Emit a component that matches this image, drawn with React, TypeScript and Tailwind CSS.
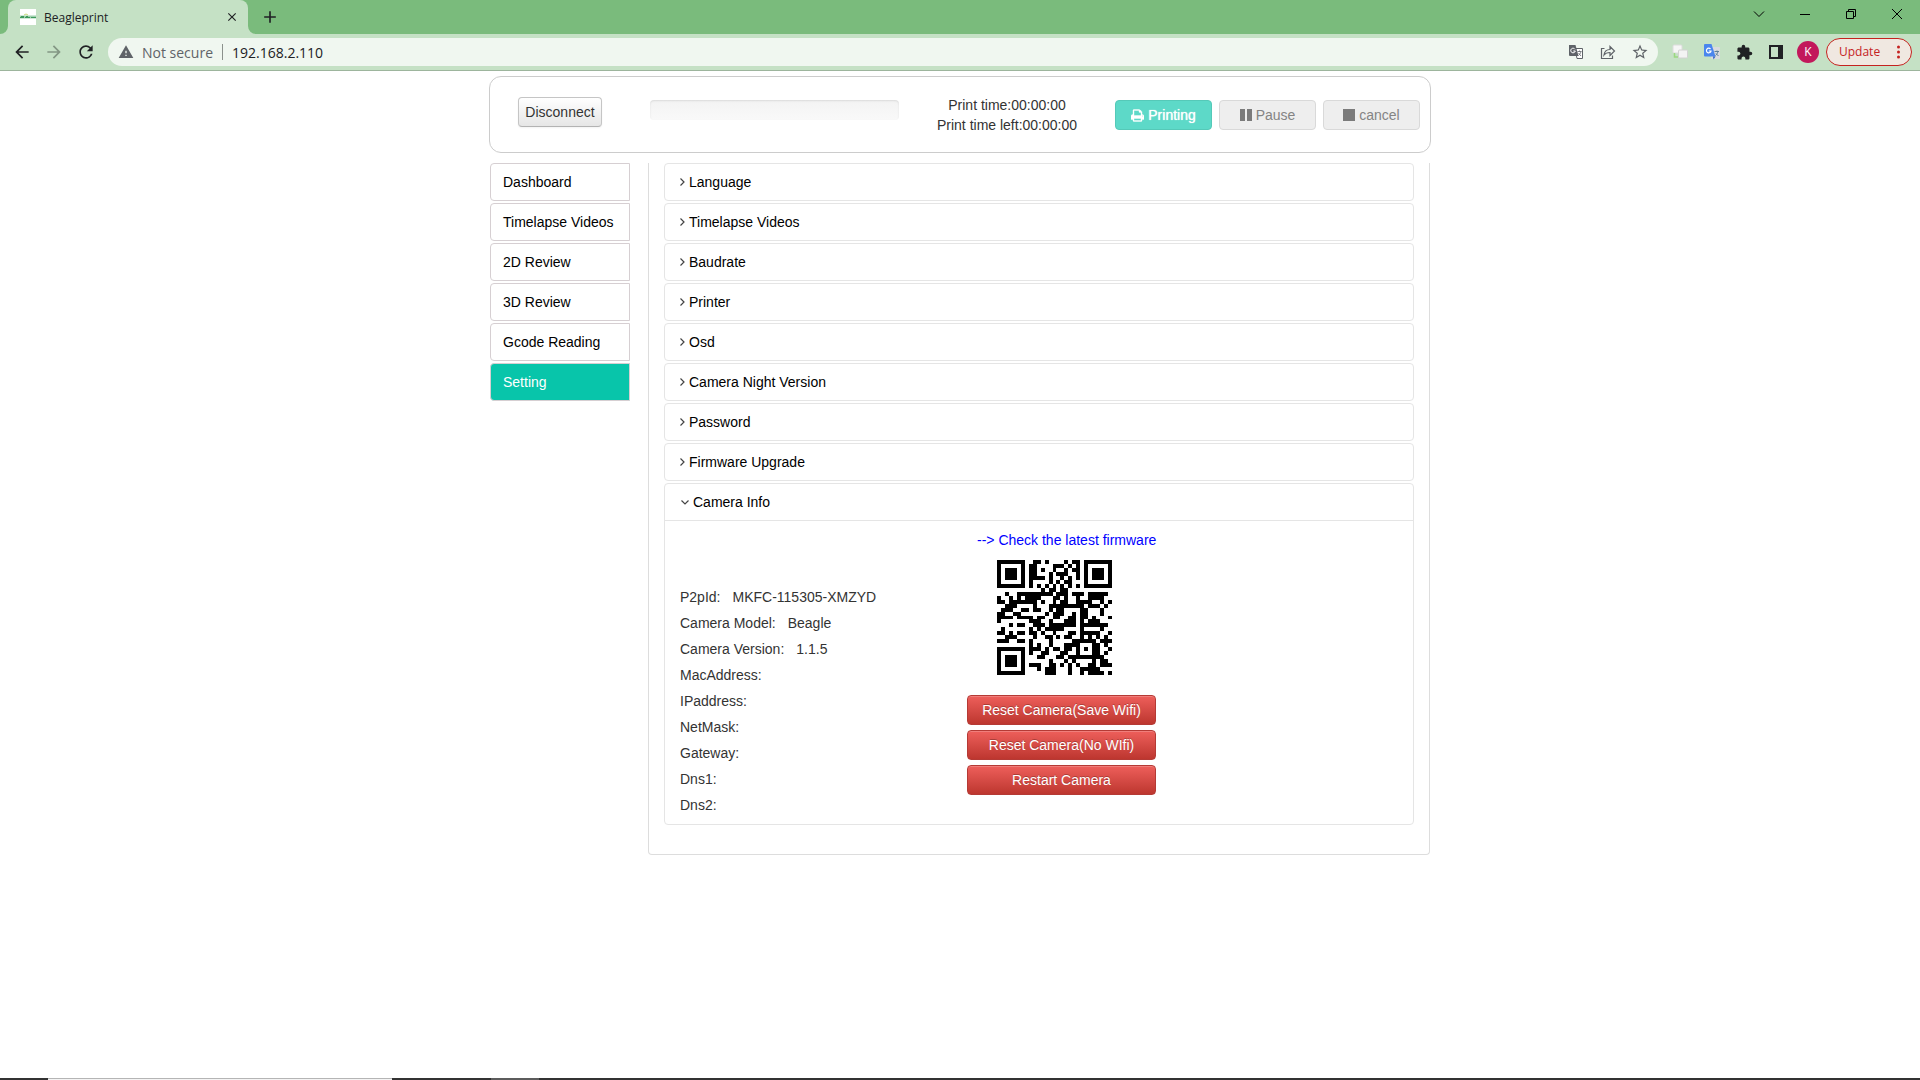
import type { ReactNode } from "react";
import {
  MdArrowBack,
  MdArrowForward,
  MdClose,
  MdAdd,
  MdExtension,
  MdRefresh,
  MdStarBorder,
  MdWarning,
} from "react-icons/md";

/* ---------- QR code (version 3, error correction H, byte mode) ---------- */

const QR_SIZE = 29;
const BLOCKS = 2;
const DATA_PER_BLOCK = 13;
const EC_PER_BLOCK = 22;
const FORMAT_BITS = "001001110111110"; // level H, mask 1

function gfMul(a: number, b: number) {
  let r = 0;
  for (let i = 7; i >= 0; i--) {
    r = (r << 1) ^ ((r >>> 7) * 0x11d);
    r ^= ((b >>> i) & 1) * a;
  }
  return r;
}

function reedSolomon(data: number[], degree: number) {
  const gen: number[] = new Array(degree).fill(0);
  gen[degree - 1] = 1;
  let root = 1;
  for (let i = 0; i < degree; i++) {
    for (let j = 0; j < degree; j++) {
      gen[j] = gfMul(gen[j], root);
      if (j + 1 < degree) gen[j] ^= gen[j + 1];
    }
    root = gfMul(root, 2);
  }
  const rem: number[] = new Array(degree).fill(0);
  for (const b of data) {
    const factor = b ^ (rem.shift() as number);
    rem.push(0);
    for (let i = 0; i < degree; i++) rem[i] ^= gfMul(gen[i], factor);
  }
  return rem;
}

function encodeQr(text: string): boolean[][] {
  let bits = "0100" + text.length.toString(2).padStart(8, "0");
  for (const ch of text) bits += ch.charCodeAt(0).toString(2).padStart(8, "0");
  bits += "0000";
  const data = (bits.match(/.{8}/g) as string[]).map((b) => parseInt(b, 2));
  for (let pad = 0xec; data.length < BLOCKS * DATA_PER_BLOCK; pad ^= 0xec ^ 0x11) data.push(pad);

  const blocks = [data.slice(0, DATA_PER_BLOCK), data.slice(DATA_PER_BLOCK)];
  const ecs = blocks.map((b) => reedSolomon(b, EC_PER_BLOCK));
  const stream: number[] = [];
  for (let i = 0; i < DATA_PER_BLOCK; i++) blocks.forEach((b) => stream.push(b[i]));
  for (let i = 0; i < EC_PER_BLOCK; i++) ecs.forEach((b) => stream.push(b[i]));

  const m: (boolean | null)[][] = Array.from({ length: QR_SIZE }, () => new Array(QR_SIZE).fill(null));
  const square = (cr: number, cc: number, radius: number, light: number[]) => {
    for (let r = -radius; r <= radius; r++)
      for (let c = -radius; c <= radius; c++) {
        const y = cr + r;
        const x = cc + c;
        if (y < 0 || x < 0 || y >= QR_SIZE || x >= QR_SIZE) continue;
        m[y][x] = !light.includes(Math.max(Math.abs(r), Math.abs(c)));
      }
  };
  square(3, 3, 4, [2, 4]);
  square(3, QR_SIZE - 4, 4, [2, 4]);
  square(QR_SIZE - 4, 3, 4, [2, 4]);
  square(22, 22, 2, [1]);
  for (let i = 8; i < QR_SIZE - 8; i++) {
    m[6][i] = i % 2 === 0;
    m[i][6] = i % 2 === 0;
  }
  const firstCopy = [
    [8, 0], [8, 1], [8, 2], [8, 3], [8, 4], [8, 5], [8, 7], [8, 8],
    [7, 8], [5, 8], [4, 8], [3, 8], [2, 8], [1, 8], [0, 8],
  ];
  for (let i = 0; i < 15; i++) {
    const on = FORMAT_BITS[i] === "1";
    m[firstCopy[i][0]][firstCopy[i][1]] = on;
    if (i < 7) m[QR_SIZE - 1 - i][8] = on;
    else m[8][QR_SIZE - 15 + i] = on;
  }
  m[QR_SIZE - 8][8] = true;

  let n = 0;
  let up = true;
  for (let right = QR_SIZE - 1; right > 0; right -= 2) {
    if (right === 6) right = 5;
    for (let k = 0; k < QR_SIZE; k++) {
      const y = up ? QR_SIZE - 1 - k : k;
      for (const x of [right, right - 1]) {
        if (m[y][x] !== null) continue;
        const bit = n < stream.length * 8 && ((stream[n >> 3] >> (7 - (n & 7))) & 1) === 1;
        n++;
        m[y][x] = bit !== (y % 2 === 0);
      }
    }
    up = !up;
  }
  return m as boolean[][];
}

function QrCode({ value }: { value: string }) {
  const path = encodeQr(value)
    .flatMap((row, y) => row.map((on, x) => (on ? `M${x} ${y}h1v1h-1z` : "")))
    .join("");
  return (
    <svg className="ml-[30px] mt-[10px] size-[115px]" viewBox="0 0 29 29" shapeRendering="crispEdges" role="img" aria-label={value}>
      <path d={path} fill="#000" />
    </svg>
  );
}

/* ---------- Browser chrome ---------- */

function IconButton({ label, className, children }: { label: string; className: string; children: ReactNode }) {
  return (
    <button type="button" aria-label={label} className={`flex h-7 shrink-0 items-center justify-center ${className}`}>
      {children}
    </button>
  );
}

function TabStrip() {
  return (
    <div className="flex h-[34px] items-stretch bg-[#7abb7c]">
      <svg className="h-2 w-2 self-end" viewBox="0 0 8 8" aria-hidden="true">
        <path d="M8 0v8H0a8 8 0 0 0 8-8z" fill="#c5e1c5" />
      </svg>
      <div className="flex w-[240px] items-center rounded-t-lg bg-[#c5e1c5] pl-3 pr-2">
        <svg className="size-4 shrink-0" viewBox="0 0 16 16" aria-hidden="true">
          <rect width="16" height="16" fill="#fff" />
          <path d="M0 8h16" stroke="#9fd0ae" strokeWidth="3" />
          <path d="M0 8.500h4M5 8.500h5M11 8.500h5M1 7.500h3M6 7.500h2" stroke="#3f9a5c" />
          <path d="M4 6l2-1 2 1" stroke="#c9d97a" fill="none" />
        </svg>
        <span className="ml-2 flex-1 pt-px text-[12px] text-[#202124]">Beagleprint</span>
        <IconButton label="Close tab" className="w-4">
          <MdClose size={14} color="#202124" />
        </IconButton>
      </div>
      <svg className="h-2 w-2 self-end" viewBox="0 0 8 8" aria-hidden="true">
        <path d="M0 0v8h8a8 8 0 0 1-8-8z" fill="#c5e1c5" />
      </svg>
      <IconButton label="New tab" className="mt-[3px] w-7">
        <MdAdd size={20} color="#202124" />
      </IconButton>
      <div className="ml-auto flex text-black">
        <IconButton label="Search tabs" className="w-[46px]">
          <svg width="12" height="12" viewBox="0 0 12 12" fill="none" stroke="currentColor"><path d="M1 3.5l5 5 5-5" /></svg>
        </IconButton>
        <IconButton label="Minimize" className="w-[46px]">
          <svg width="10" height="10" viewBox="0 0 10 10" fill="none" stroke="currentColor"><path d="M0 5.5h10" /></svg>
        </IconButton>
        <IconButton label="Restore" className="w-[46px]">
          <svg width="10" height="10" viewBox="0 0 10 10" fill="none" stroke="currentColor"><path d="M.5 2.5h7v7h-7zM2.5 2.5v-2h7v7h-2" /></svg>
        </IconButton>
        <IconButton label="Close" className="w-[46px]">
          <svg width="10" height="10" viewBox="0 0 10 10" fill="none" stroke="currentColor"><path d="M0 0l10 10M10 0L0 10" /></svg>
        </IconButton>
      </div>
    </div>
  );
}

function Toolbar() {
  return (
    <div className="flex h-[37px] items-center border-b border-[#9db59d] bg-[#c5e1c5] pl-[6px] pr-2">
      <IconButton label="Back" className="w-8"><MdArrowBack size={20} color="#202124" /></IconButton>
      <IconButton label="Forward" className="w-8"><MdArrowForward size={20} color="#839684" /></IconButton>
      <IconButton label="Reload" className="w-8"><MdRefresh size={20} color="#202124" /></IconButton>
      <div className="ml-[6px] flex h-7 flex-1 items-center rounded-full bg-[#f0f7f0] pl-[10px] pr-[2px] text-[14px]">
        <MdWarning size={16} color="#5f6368" />
        <span className="ml-2 text-[#5f6368]">Not secure</span>
        <span className="mx-[9px] h-4 w-px bg-[#8b918c]" />
        <input aria-label="Address" defaultValue="192.168.2.110" className="min-w-0 flex-1 bg-transparent text-[#202124] outline-none" />
        <IconButton label="Translate this page" className="w-8">
          <svg width="14" height="14" viewBox="0 0 14 14">
            <path d="M6 3.5h7.5v10H8z" fill="#fff" stroke="#5f6368" />
            <path d="M0 0h6.5l3 11H1a1 1 0 0 1-1-1z" fill="#5f6368" />
            <path d="M6 4.3A2.3 2.3 0 1 0 6.300 6H4.300" fill="none" stroke="#fff" />
            <path d="M8.500 6.500h4M10.500 5.500v1M12 6.500c-.5 2-1.500 3-2.500 4M9.500 8l2.500 3" fill="none" stroke="#5f6368" strokeWidth=".8" />
          </svg>
        </IconButton>
        <IconButton label="Share" className="w-8">
          <svg width="16" height="16" viewBox="0 0 16 16" fill="none" stroke="#5f6368" strokeWidth="1.200">
            <path d="M4.500 4.500H1.500v10h11v-3" />
            <path d="M4 11c.5-4 3-5.500 6-5.500V2.500l4.500 4.500-4.500 4.500V8.500C7.500 8.500 5.500 9 4 11z" />
          </svg>
        </IconButton>
        <IconButton label="Bookmark" className="w-8"><MdStarBorder size={18} color="#5f6368" /></IconButton>
      </div>
      <div className="ml-[6px] flex items-center">
        <IconButton label="Page links" className="w-8">
          <svg width="16" height="16" viewBox="0 0 16 16">
            <rect x="1" y="1" width="9" height="8" rx="1" fill="#f6f6f6" stroke="#dcdcdc" />
            <path d="M2.500 9v4H6" fill="none" stroke="#9bd880" strokeWidth="1.500" />
            <rect x="6.500" y="6" width="9" height="8" rx="1" fill="#f3f3f3" stroke="#d2d2d2" />
          </svg>
        </IconButton>
        <IconButton label="Google Translate" className="w-8">
          <svg width="16" height="16" viewBox="0 0 16 16">
            <rect x="7" y="3" width="9" height="12" rx="1" fill="#d9dcde" />
            <path d="M0 1a1 1 0 0 1 1-1h6.500l4 12.500H1a1 1 0 0 1-1-1z" fill="#4a86ee" />
            <path d="M9 12.500h2.500L9.500 15.500z" fill="#2f5fc4" />
            <path d="M6.500 5A2.300 2.300 0 1 0 7 7H4.800" fill="none" stroke="#fff" strokeWidth="1.200" />
            <path d="M10.500 7.500h4.500M13 6.500v1M14 7.500c-.5 2-1.500 3-2.500 4M12 9.500l2.500 2.500" fill="none" stroke="#5c7f99" />
          </svg>
        </IconButton>
        <IconButton label="Extensions" className="w-8"><MdExtension size={17} color="#202124" /></IconButton>
        <IconButton label="Side panel" className="w-8">
          <svg width="14" height="14" viewBox="0 0 14 14"><path d="M1 1h12v12H1z" fill="none" stroke="#202124" strokeWidth="2" /><path d="M9 1h4v12H9z" fill="#202124" /></svg>
        </IconButton>
        <IconButton label="Profile" className="w-8">
          <span className="flex size-[22px] items-center justify-center rounded-full bg-[#c2185b] text-[12px] text-white">K</span>
        </IconButton>
      </div>
      <button type="button" className="ml-[2px] flex h-7 w-[86px] items-center rounded-full border border-[#c5221f] bg-[#f0e8e1] pl-3 text-[12px] text-[#c5221f]">
        Update
        <svg className="ml-auto mr-[11px]" width="3" height="14" viewBox="0 0 3 14" fill="#c5221f" aria-hidden="true">
          <circle cx="1.500" cy="2" r="1.500" /><circle cx="1.500" cy="7" r="1.500" /><circle cx="1.500" cy="12" r="1.500" />
        </svg>
      </button>
    </div>
  );
}

/* ---------- Page ---------- */

function PrinterIcon() {
  return (
    <svg className="h-[13px] w-[13px]" viewBox="0 0 1664 1664" fill="currentColor" stroke="currentColor" strokeWidth="50" aria-hidden="true">
      <path
        transform="translate(0 1472) scale(1 -1)"
        d="M384 0h896v256h-896v-256zM384 640h896v384h-160q-40 0 -68 28t-28 68v160h-640v-640zM1536 576q0 26 -19 45t-45 19t-45 -19t-19 -45t19 -45t45 -19t45 19t19 45zM1664 576v-416q0 -13 -9.500 -22.500t-22.500 -9.500h-224v-160q0 -40 -28 -68t-68 -28h-960q-40 0 -68 28t-28 68v160h-224q-13 0 -22.500 9.500t-9.500 22.500v416q0 79 56.500 135.500t135.500 56.500h64v544q0 40 28 68t68 28h672q40 0 88 -20t76 -48l152 -152q28 -28 48 -76t20 -88v-256h64q79 0 135.500 -56.500t56.500 -135.500z"
      />
    </svg>
  );
}

function PrintHeader() {
  const job = "flex h-[30px] w-[97px] items-center justify-center gap-1 rounded border";
  return (
    <header className="mt-[5px] flex h-[77px] items-start rounded-xl border border-[#ccc] pl-7 pr-[10px] pt-5 leading-5 text-[#333]">
      <button
        type="button"
        className="h-[30px] w-[84px] rounded border border-[#c5c5c5] border-b-[#b3b3b3] bg-linear-to-b from-white to-[#e6e6e6] shadow-[0_1px_2px_rgba(0,0,0,0.05)]"
      >
        Disconnect
      </button>
      <div
        role="progressbar"
        aria-label="Print progress"
        aria-valuenow={0}
        className="ml-12 mt-[3px] h-5 w-[249px] rounded bg-linear-to-b from-[#f3f3f3] to-[#f9f9f9] shadow-[inset_0_1px_2px_rgba(0,0,0,0.1)]"
      />
      <div className="-mt-[2px] flex-1 text-center">
        <p>Print time:00:00:00</p>
        <p>Print time left:00:00:00</p>
      </div>
      <div className="mt-[3px] flex gap-[7px]">
        <button type="button" className={`${job} border-[#55c9b8] bg-[#5dd9c8] text-white [text-shadow:0_0_1px_white]`}>
          <PrinterIcon />
          Printing
        </button>
        <button type="button" className={`${job} border-[#d9d9d9] bg-[#eee] text-[#848484]`}>
          <svg width="12" height="12" viewBox="0 0 12 12" fill="#7b7b7b" aria-hidden="true"><path d="M0 0h5v12H0zM7 0h5v12H7z" /></svg>
          Pause
        </button>
        <button type="button" className={`${job} border-[#d9d9d9] bg-[#eee] text-[#848484]`}>
          <svg width="12" height="12" viewBox="0 0 12 12" fill="#7b7b7b" aria-hidden="true"><path d="M0 0h12v12H0z" /></svg>
          cancel
        </button>
      </div>
    </header>
  );
}

const NAV = ["Dashboard", "Timelapse Videos", "2D Review", "3D Review", "Gcode Reading", "Setting"];

function SideNav() {
  return (
    <nav className="flex w-[140px] shrink-0 flex-col gap-[2px]">
      {NAV.map((item) => (
        <a
          key={item}
          href="#"
          aria-current={item === "Setting" ? "page" : undefined}
          className={`flex h-[38px] items-center whitespace-nowrap rounded-l border border-[#d6cfd2] pl-3 ${
            item === "Setting" ? "bg-[#08c5aa] text-white" : "text-black"
          }`}
        >
          {item}
        </a>
      ))}
    </nav>
  );
}

const SECTIONS = [
  "Language",
  "Timelapse Videos",
  "Baudrate",
  "Printer",
  "Osd",
  "Camera Night Version",
  "Password",
  "Firmware Upgrade",
];

const INFO: [string, string][] = [
  ["P2pId:", "MKFC-115305-XMZYD"],
  ["Camera Model:", "Beagle"],
  ["Camera Version:", "1.1.5"],
  ["MacAddress:", ""],
  ["IPaddress:", ""],
  ["NetMask:", ""],
  ["Gateway:", ""],
  ["Dns1:", ""],
  ["Dns2:", ""],
];

const ACTIONS = ["Reset Camera(Save Wifi)", "Reset Camera(No WIfi)", "Restart Camera"];

function Settings() {
  return (
    <main className="ml-[18px] flex-1 rounded-b border border-t-0 border-[#ddd] px-[15px] pb-[29px]">
      <div className="flex flex-col gap-[2px]">
        {SECTIONS.map((title) => (
          <button key={title} type="button" aria-expanded={false} className="flex h-[38px] items-center rounded border border-[#e5e5e5] pl-[15px] text-black">
            <svg width="5" height="8" viewBox="0 0 5 8" fill="none" stroke="#444" strokeWidth="1.200" aria-hidden="true"><path d="M.5.5L4 4 .5 7.500" /></svg>
            <span className="ml-1">{title}</span>
          </button>
        ))}
        <section className="rounded border border-[#e5e5e5]">
          <button type="button" aria-expanded={true} className="flex h-9 w-full items-center pl-4 text-black">
            <svg width="8" height="5" viewBox="0 0 8 5" fill="none" stroke="#444" strokeWidth="1.200" aria-hidden="true"><path d="M.5.5L4 4 7.500.5" /></svg>
            <span className="ml-1">Camera Info</span>
          </button>
          <div className="flex border-t border-[#e5e5e5] px-[15px] pb-[6px] leading-5 text-[#333]">
            <dl className="w-[287px] pt-[63px]">
              {INFO.map(([label, value]) => (
                <div key={label} className="flex h-[26px] items-center gap-3">
                  <dt>{label}</dt>
                  <dd>{value}</dd>
                </div>
              ))}
            </dl>
            <div className="w-[189px] pt-[9px]">
              <a href="#" className="ml-[10px] block whitespace-nowrap text-[#00f]">--&gt; Check the latest firmware</a>
              <QrCode value="MKFC-115305-XMZYD" />
              <div className="mt-5 flex flex-col gap-[5px]">
                {ACTIONS.map((label) => (
                  <button
                    key={label}
                    type="button"
                    className="h-[30px] whitespace-nowrap rounded border border-[#b53a35] bg-linear-to-b from-[#ee5f5b] to-[#bd362f] text-white shadow-[inset_0_1px_0_rgba(255,255,255,0.2)] [text-shadow:0_-1px_0_rgba(0,0,0,0.25)]"
                  >
                    {label}
                  </button>
                ))}
              </div>
            </div>
          </div>
        </section>
      </div>
    </main>
  );
}

export default function App() {
  return (
    <div className="flex min-h-screen flex-col bg-white">
      <div className="font-['Open_Sans',sans-serif]">
        <TabStrip />
        <Toolbar />
      </div>
      <div className="mx-auto w-full max-w-[942px] flex-1 font-['Liberation_Sans',sans-serif] text-[14px]">
        <PrintHeader />
        <div className="mt-[10px] flex items-start px-px">
          <SideNav />
          <Settings />
        </div>
      </div>
      <div className="flex h-[2px] bg-[#333]">
        <div className="ml-[48px] w-[344px] border-t border-[#b5b5b5] bg-[#f4f4f4]" />
        <div className="ml-[99px] w-[48px] bg-[#5c5c5c]" />
      </div>
    </div>
  );
}
